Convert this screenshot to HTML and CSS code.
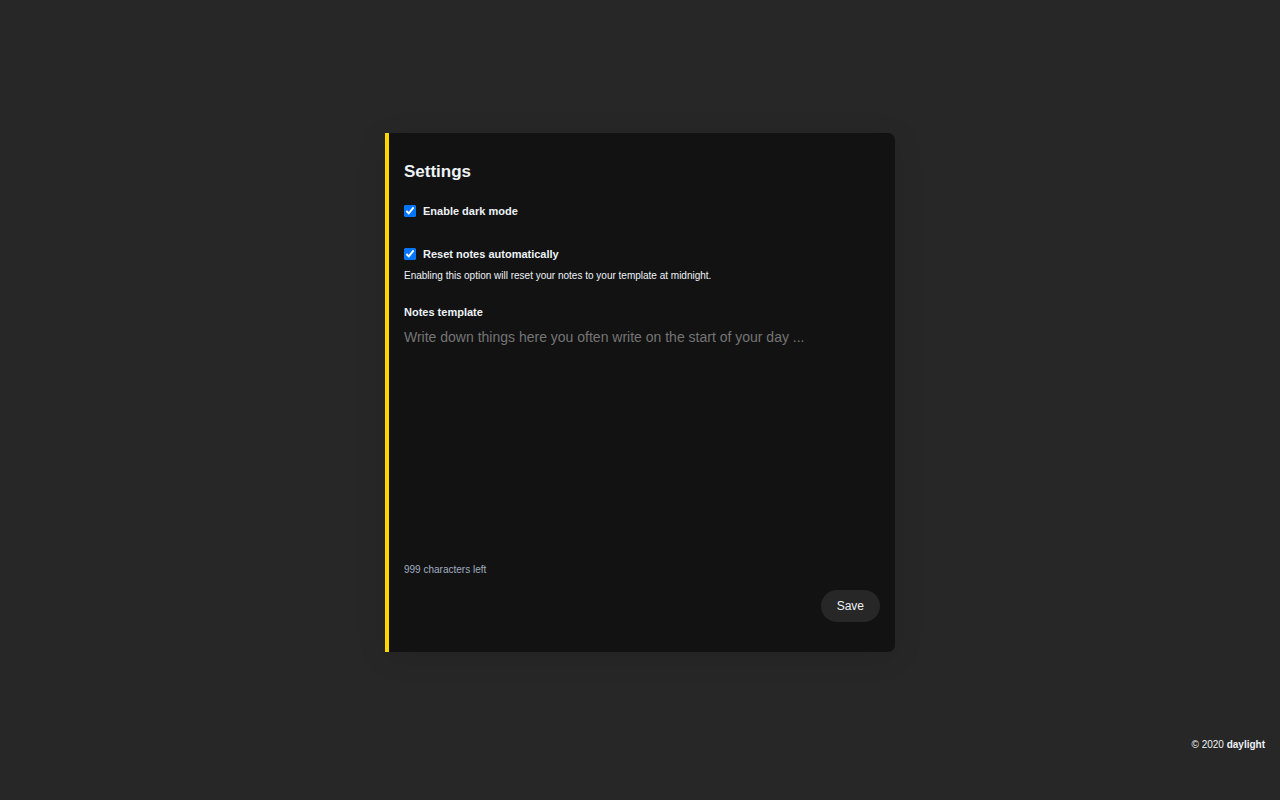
FILE: index.html
```html
<!DOCTYPE html>
<html lang="en">
<head>
<meta charset="utf-8">
<title>Settings – daylight</title>
<link rel="stylesheet" href="styles.css">
</head>
<body>
<main class="main">
  <form class="card">
    <h1 class="title">Settings</h1>
    <div class="field field-dark">
      <label class="check"><input class="box" type="checkbox" checked>Enable dark mode</label>
    </div>
    <div class="field field-reset">
      <label class="check"><input class="box" type="checkbox" aria-describedby="reset-hint" checked>Reset notes automatically</label>
      <p class="hint" id="reset-hint">Enabling this option will reset your notes to your template at midnight.</p>
    </div>
    <div class="field">
      <label class="label" for="template">Notes template</label>
      <textarea class="template" id="template" maxlength="999" placeholder="Write down things here you often write on the start of your day ..."></textarea>
      <p class="counter">999 characters left</p>
    </div>
    <div class="actions"><button class="save" type="button">Save</button></div>
  </form>
</main>
<footer class="footer">© 2020 <a class="brand" href="#">daylight</a></footer>
</body>
</html>
```
FILE: styles.css
```css
* {
  box-sizing: border-box;
}

body {
  margin: 0;
  min-height: 100vh;
  display: flex;
  flex-direction: column;
  background: #272727;
  color: #edf2f7;
  font-family: "Liberation Sans", Arial, sans-serif;
  font-size: 14px;
}

.main {
  flex: 1;
  display: flex;
  justify-content: center;
  align-items: center;
  padding: 48px 16px 0;
}

.card {
  width: 100%;
  max-width: 510px;
  padding: 28px 15px 30px;
  border-left: 4px solid #ffd500;
  border-radius: 0 7px 7px 0;
  background: #121212;
  box-shadow: 0 5px 30px rgba(0, 0, 0, 0.1);
}

.title {
  margin: 0 0 22px;
  font-size: 17px;
  line-height: 22px;
}

.field-dark {
  margin-bottom: 31px;
}

.field-reset {
  margin-bottom: 23px;
}

.check {
  display: flex;
  align-items: center;
  gap: 7px;
  font-size: 11px;
  line-height: 12px;
  font-weight: bold;
}

.box {
  width: 12px;
  height: 12px;
  margin: 0;
}

.hint,
.counter {
  margin: 0;
  font-size: 10px;
  line-height: 12px;
}

.hint {
  margin-top: 10px;
}

.counter {
  color: #a0aec0;
}

.label {
  display: block;
  font-size: 11px;
  line-height: 14px;
  font-weight: bold;
}

.template {
  display: block;
  width: 100%;
  height: 236px;
  margin: 9px 0 0;
  padding: 0;
  border: 0;
  outline: 0;
  resize: none;
  background: transparent;
  color: inherit;
  font: inherit;
  line-height: 18px;
}

.template::placeholder {
  color: #757575;
}

.actions {
  display: flex;
  justify-content: flex-end;
  margin-top: 14px;
}

.save {
  padding: 8px 16px;
  border: 0;
  border-radius: 16px;
  background: #272727;
  color: inherit;
  font-family: inherit;
  font-size: 12px;
  line-height: 16px;
}

.footer {
  padding: 0 15px 48px;
  text-align: right;
  font-size: 10px;
  line-height: 15px;
}

.brand {
  color: inherit;
  font-weight: bold;
  text-decoration: none;
}
```
